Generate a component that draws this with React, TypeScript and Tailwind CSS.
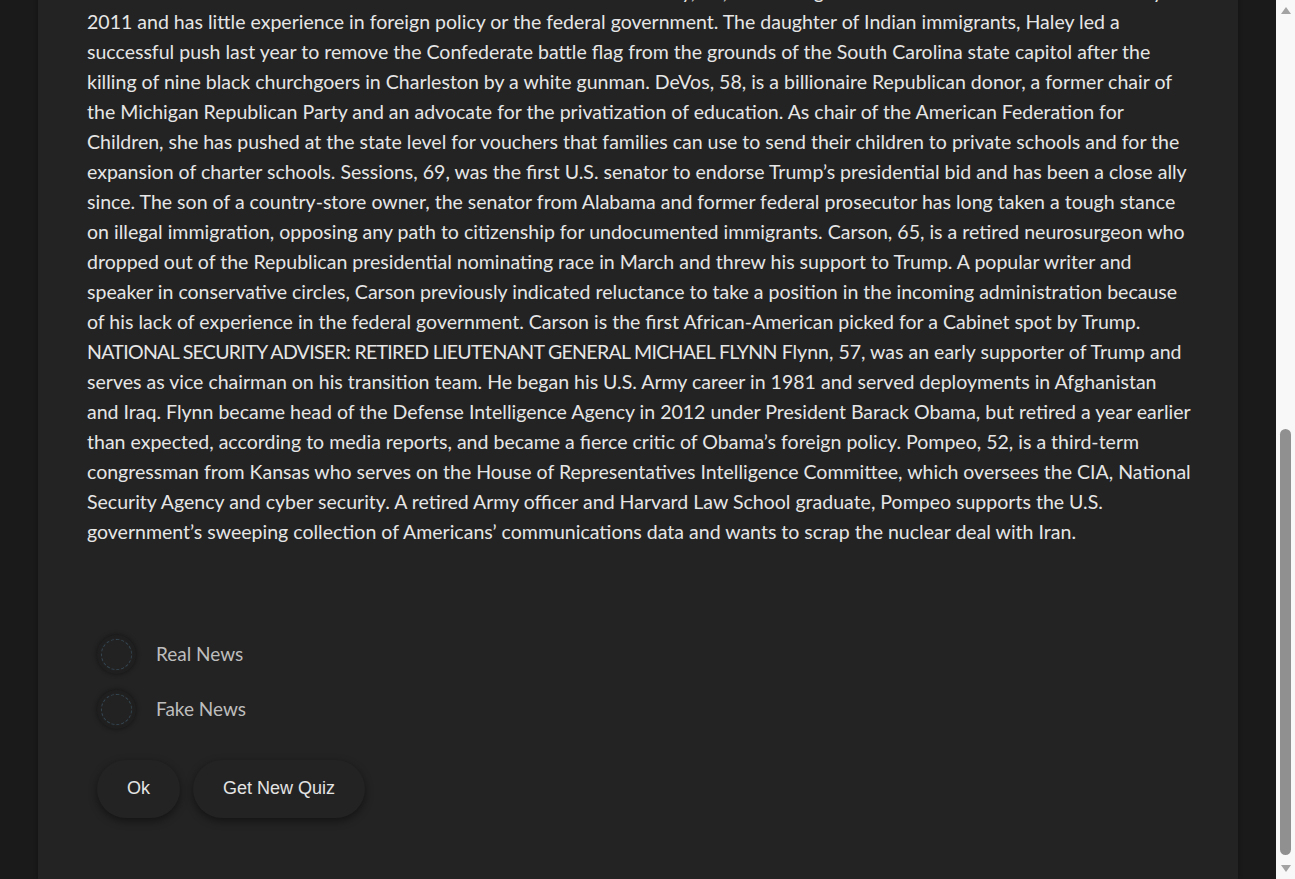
import { useLayoutEffect, useRef, useState } from "react";

const intro =
  "U.S. President-elect Donald Trump has chosen South Carolina Governor Nikki Haley as U.S. ambassador to the United Nations and billionaire school-choice advocate Betsy DeVos as education secretary, adding two women to a Cabinet that so far has been dominated by white men. Trump has already named U.S. Senator Jeff Sessions as attorney general, retired Lieutenant General Michael Flynn as national security adviser and Representative Mike Pompeo as director of the Central Intelligence Agency. Retired neurosurgeon Ben Carson, a former rival for the Republican nomination, has been offered the post of secretary of housing and urban development. Here are some facts about the people Trump has picked or is considering for top jobs in his administration. U.N. AMBASSADOR: GOVERNOR NIKKI HALEY Haley, 44, has been governor of South Carolina since January";

// lines kept as in the source layout
const lines = [
  "2011 and has little experience in foreign policy or the federal government. The daughter of Indian immigrants, Haley led a",
  "successful push last year to remove the Confederate battle flag from the grounds of the South Carolina state capitol after the",
  "killing of nine black churchgoers in Charleston by a white gunman. DeVos, 58, is a billionaire Republican donor, a former chair of",
  "the Michigan Republican Party and an advocate for the privatization of education. As chair of the American Federation for",
  "Children, she has pushed at the state level for vouchers that families can use to send their children to private schools and for the",
  "expansion of charter schools. Sessions, 69, was the first U.S. senator to endorse Trump\u2019s presidential bid and has been a close ally",
  "since. The son of a country-store owner, the senator from Alabama and former federal prosecutor has long taken a tough stance",
  "on illegal immigration, opposing any path to citizenship for undocumented immigrants. Carson, 65, is a retired neurosurgeon who",
  "dropped out of the Republican presidential nominating race in March and threw his support to Trump. A popular writer and",
  "speaker in conservative circles, Carson previously indicated reluctance to take a position in the incoming administration because",
  "of his lack of experience in the federal government. Carson is the first African-American picked for a Cabinet spot by Trump.",
  "__CAPS__ Flynn, 57, was an early supporter of Trump and",
  "serves as vice chairman on his transition team. He began his U.S. Army career in 1981 and served deployments in Afghanistan",
  "and Iraq. Flynn became head of the Defense Intelligence Agency in 2012 under President Barack Obama, but retired a year earlier",
  "than expected, according to media reports, and became a fierce critic of Obama\u2019s foreign policy. Pompeo, 52, is a third-term",
  "congressman from Kansas who serves on the House of Representatives Intelligence Committee, which oversees the CIA, National",
  "Security Agency and cyber security. A retired Army officer and Harvard Law School graduate, Pompeo supports the U.S.",
  "government\u2019s sweeping collection of Americans\u2019 communications data and wants to scrap the nuclear deal with Iran.",
];

function Radio({ label, checked, onSelect }: { label: string; checked: boolean; onSelect: () => void }) {
  return (
    <label className="flex items-center gap-5 h-[55px] cursor-pointer" onClick={onSelect}>
      <span className="w-[39px] h-[39px] rounded-full bg-[#222222] border-[3px] border-[#1f1f1f] shadow-[0_0_5px_rgba(0,0,0,0.45)] flex items-center justify-center">
        <span className="w-[31px] h-[31px] rounded-full border border-dashed border-[#344551] flex items-center justify-center">
          {checked && <span className="w-3 h-3 rounded-full bg-[#cfcfcf]" />}
        </span>
      </span>
      <span className="text-[19px] text-[#bdbdbd]">{label}</span>
    </label>
  );
}

function Scrollbar() {
  return (
    <div className="w-[19px] shrink-0 bg-[#f8f8f8] flex flex-col items-center pt-[6px] pb-[6px]">
      <svg width="12" height="9" viewBox="0 0 12 9">
        <path d="M6 1 L11 8 L1 8 Z" fill="#a3a3a3" />
      </svg>
      <div className="flex-1 flex flex-col justify-end pb-[9px]">
        <div className="w-[11px] h-[426px] rounded-full bg-[#909090]" />
      </div>
      <svg width="12" height="9" viewBox="0 0 12 9">
        <path d="M1 1 L11 1 L6 8 Z" fill="#a3a3a3" />
      </svg>
    </div>
  );
}

export default function App() {
  const ref = useRef<HTMLDivElement>(null);
  const [choice, setChoice] = useState<string | null>(null);

  useLayoutEffect(() => {
    if (ref.current) ref.current.scrollTop = ref.current.scrollHeight;
  }, []);

  return (
    <div className="flex h-screen bg-[#1a1a1a] font-['Lato',sans-serif]">
      <div ref={ref} className="flex-1 overflow-y-scroll [scrollbar-width:none]">
        <div className="max-w-[1200px] mx-auto bg-[#232323] shadow-[0_0_4px_rgba(0,0,0,0.35)] px-[49px] pt-[60px] pb-[61px]">
          <h1 className="text-[32px] font-bold text-[#ececec] mb-4">Real or Fake?</h1>
          <p className="text-[19px] text-[#9a9a9a] mb-10">Read the article below and decide whether it is real news or fake news.</p>
          <div className="text-[19.55px] leading-[30px] text-[#e6e6e6]">
            <p>{intro}</p>
            <p className="whitespace-nowrap">
              {lines.map((l, i) => (
                <span key={i}>
                  {l.startsWith("__CAPS__") ? (
                    <>
                      <span className="tracking-[-0.7px]">NATIONAL SECURITY ADVISER: RETIRED LIEUTENANT GENERAL MICHAEL FLYNN</span>
                      {l.replace("__CAPS__", "")}
                    </>
                  ) : (
                    l
                  )}
                  {i < lines.length - 1 && <br />}
                </span>
              ))}
            </p>
          </div>

          <div className="mt-[80px] pl-[10px]">
            <Radio label="Real News" checked={choice === "real"} onSelect={() => setChoice("real")} />
            <Radio label="Fake News" checked={choice === "fake"} onSelect={() => setChoice("fake")} />

            <div className="flex gap-[13px] mt-[23px] font-['Liberation_Sans',Arial,sans-serif]">
              <button className="h-[58px] px-[30px] rounded-full bg-[#232323] text-[18px] text-[#e4e4e4] shadow-[0_3px_8px_rgba(0,0,0,0.45)]">
                Ok
              </button>
              <button className="h-[58px] px-[30px] rounded-full bg-[#232323] text-[18px] text-[#e4e4e4] shadow-[0_3px_8px_rgba(0,0,0,0.45)]">
                Get New Quiz
              </button>
            </div>
          </div>
        </div>
      </div>
      <Scrollbar />
    </div>
  );
}
